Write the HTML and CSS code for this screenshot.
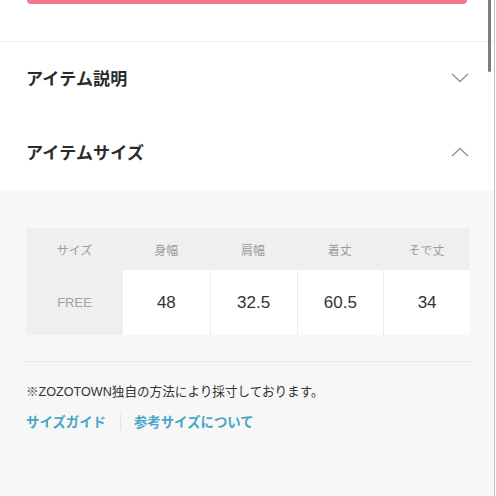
FILE: index.html
```html
<!DOCTYPE html>
<html lang="ja">
<head>
<meta charset="utf-8">
<link rel="stylesheet" href="styles.css">
</head>
<body>
<div class="page">
  <div class="top">
    <div class="cart-btn"></div>
  </div>
  <div class="acc-row">
    <span class="acc-title">アイテム説明</span>
    <svg class="chev" width="18" height="10" viewBox="0 0 18 10"><path d="M1 1 L9 8.5 L17 1" fill="none" stroke="#9a9a9a" stroke-width="1.6"/></svg>
  </div>
  <div class="acc-row">
    <span class="acc-title">アイテムサイズ</span>
    <svg class="chev" width="18" height="10" viewBox="0 0 18 10"><path d="M1 9 L9 1.5 L17 9" fill="none" stroke="#9a9a9a" stroke-width="1.6"/></svg>
  </div>
  <div class="size-area">
    <div class="size-table">
      <div class="th">サイズ</div>
      <div class="th">身幅</div>
      <div class="th">肩幅</div>
      <div class="th">着丈</div>
      <div class="th">そで丈</div>
      <div class="td-label">FREE</div>
      <div class="td first">48</div>
      <div class="td">32.5</div>
      <div class="td">60.5</div>
      <div class="td">34</div>
    </div>
    <div class="rule"></div>
    <p class="note">※ZOZOTOWN独自の方法により採寸しております。</p>
    <div class="links">
      <span class="link">サイズガイド</span>
      <span class="sep"></span>
      <span class="link">参考サイズについて</span>
    </div>
    <div class="bottom-rule"></div>
  </div>
  <div class="scroll-thumb"></div>
</div>
</body>
</html>
```

FILE: styles.css
```css
html, body {
  margin: 0;
  padding: 0;
  background: #ffffff;
}
body {
  font-family: "Liberation Sans", "Noto Sans CJK JP", sans-serif;
  color: #333333;
  height: 496px;
  overflow: hidden;
}
.page {
  position: relative;
  width: 494px;
  height: 496px;
  border-right: 1px solid #c4c4c4;
  display: flex;
  flex-direction: column;
  overflow: hidden;
}
.top {
  height: 41px;
  border-bottom: 1px solid #efefef;
  padding: 0 27px 0 27px;
  flex-shrink: 0;
}
.cart-btn {
  height: 4px;
  background: #ee7b89;
  border-radius: 0 0 8px 8px;
}
.acc-row {
  height: 74px;
  display: flex;
  align-items: center;
  justify-content: space-between;
  padding: 0 25px 0 26px;
  flex-shrink: 0;
}
.acc-title {
  font-family: "Noto Sans CJK JP", sans-serif;
  font-size: 17px;
  font-weight: 700;
  color: #2b2b2b;
  line-height: 1;
  padding-bottom: 4px;
  letter-spacing: 0.2px;
}
.chev {
  display: block;
  margin-bottom: 2px;
}
.size-area {
  flex: 1;
  background: #f7f7f7;
  padding: 38px 24px 0 26px;
}
.size-table {
  display: grid;
  grid-template-columns: 97px repeat(4, 1fr);
  grid-template-rows: 42px 65px;
  background: #efefef;
}
.th {
  display: flex;
  align-items: center;
  justify-content: center;
  font-family: "Noto Sans CJK JP", sans-serif;
  font-size: 12px;
  color: #9c9c9c;
}
.td-label {
  display: flex;
  align-items: center;
  justify-content: center;
  font-size: 13px;
  color: #a3a3a3;
}
.td {
  display: flex;
  align-items: center;
  justify-content: center;
  background: #ffffff;
  border-left: 1px solid #ededed;
  font-size: 17px;
  color: #333333;
}
.td.first {
  border-left: none;
}
.rule {
  height: 1px;
  background: #e8e8e8;
  margin: 26px -2px 0 -2px;
}
.note {
  margin: 22px 0 0 0;
  font-size: 12.6px;
  line-height: 16px;
  color: #333333;
}
.links {
  display: flex;
  align-items: center;
  margin-top: 13px;
  height: 18px;
}
.link {
  font-family: "Noto Sans CJK JP", sans-serif;
  font-size: 13.4px;
  font-weight: 700;
  color: #48a4c8;
  line-height: 1;
}
.sep {
  width: 1px;
  height: 16px;
  background: #e4e4e4;
  margin: 0 13px 0 14px;
}
.bottom-rule {
  height: 1px;
  background: #f1f1f1;
  margin: 36px -26px 0 -26px;
}
.scroll-thumb {
  position: absolute;
  top: 0;
  right: 3px;
  width: 3px;
  height: 72px;
  border-radius: 0 0 2px 2px;
  background: #7c7c7c;
}
```
